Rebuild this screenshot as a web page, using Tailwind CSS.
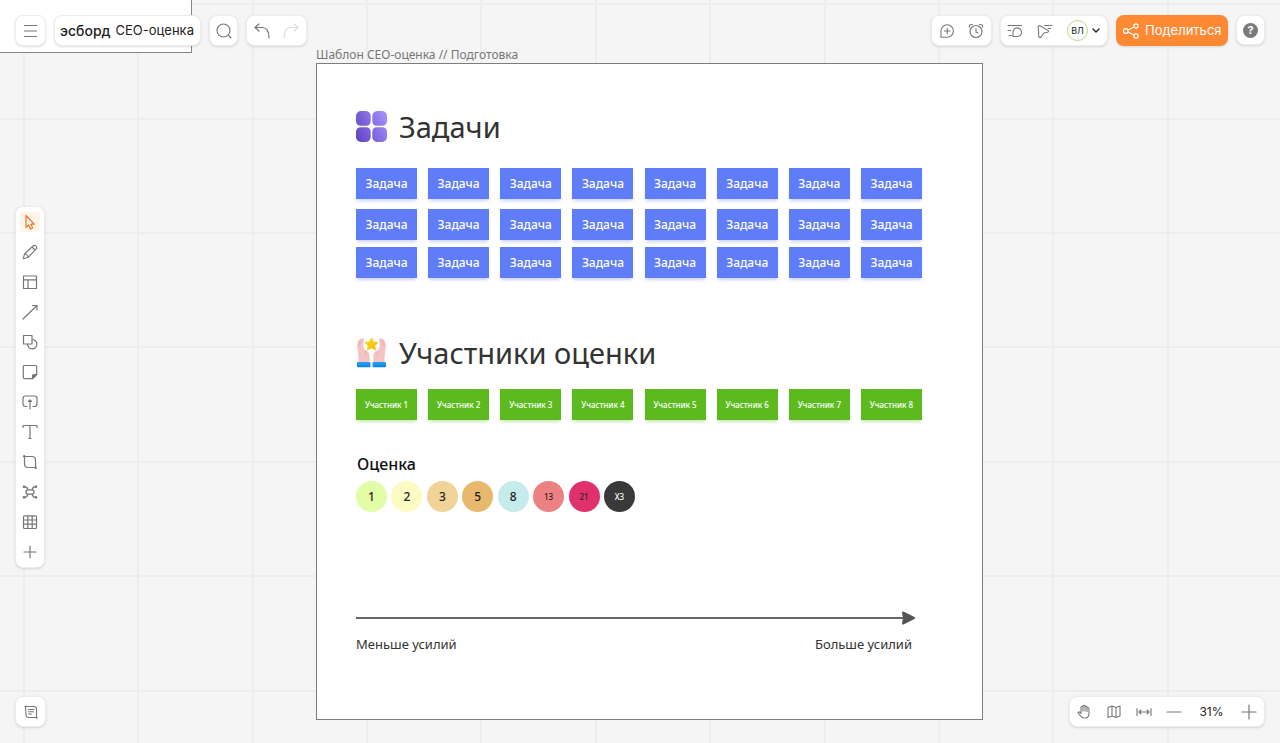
<!DOCTYPE html>
<html lang="ru">
<head>
<meta charset="utf-8">
<meta name="viewport" content="width=device-width, initial-scale=1">
<title>СЕО-оценка</title>
<script src="https://cdn.jsdelivr.net/npm/@tailwindcss/browser@4"></script>
</head>
<body class="relative h-screen min-h-[640px] overflow-hidden bg-[#f5f5f5] font-['Noto_Sans',sans-serif] text-[#333]">

<!-- Canvas -->
<main class="absolute inset-0 overflow-hidden">
  <svg class="absolute inset-0 h-full w-full" fill="none" stroke="#ededed" stroke-width="2" aria-hidden="true">
    <path d="M24 0V2000M138 0V2000M253 0V2000M367 0V2000M481 0V2000M596 0V2000M710 0V2000M825 0V2000M939 0V2000M1053 0V2000M1168 0V2000M0 4H3000M0 119H3000M0 233H3000M0 347H3000M0 462H3000M0 576H3000M0 691H3000"/>
  </svg>
  <div class="absolute top-0 left-0 h-[53px] w-48 border-r border-b border-[#858585] bg-white"></div>

  <section class="absolute top-[46px] left-[316px] w-[667px]">
    <h1 class="h-[17px] text-[12px] leading-[18px] text-[#757575]">Шаблон СЕО-оценка // Подготовка</h1>
    <div class="flex h-[657px] flex-col border border-[#7d7d7d] bg-white pt-[47px] pr-[60px] pl-[39px]">
      <div class="flex h-[31px] items-center gap-3">
        <svg class="h-[31px] w-[31px]" viewBox="0 0 31 31" aria-hidden="true">
          <defs><linearGradient id="g" gradientUnits="userSpaceOnUse" x1="0" y1="24" x2="31" y2="8"><stop offset="0" stop-color="#6447c4"/><stop offset="1" stop-color="#a18dfb"/></linearGradient></defs>
          <path fill="url(#g)" d="M5 0h5a5 5 0 0 1 4.700 5v5q0 4.700-4.700 4.700h-5q-5 0-5-4.700v-5a5 5 0 0 1 5-5zM21 0h5a5 5 0 0 1 5 5v5q0 4.700-5 4.700h-5q-4.700 0-4.700-4.700v-5a5 5 0 0 1 4.700-5zM5 16.300h5q4.700 0 4.700 4.700v5a5 5 0 0 1-4.700 5h-5a5 5 0 0 1-5-5v-5q0-4.700 5-4.700zM21 16.300h5q5 0 5 4.700v5a5 5 0 0 1-5 5h-5a5 5 0 0 1-4.700-5v-5q0-4.700 4.700-4.700z"/>
        </svg>
        <h2 class="text-[29px] leading-8">Задачи</h2>
      </div>
      <div id="tasks" class="mt-[26px] flex flex-col"></div>

      <div class="mt-[59px] flex h-[31px] items-center gap-3">
        <svg class="h-[31px] w-[31px]" viewBox="0 0 31 31" aria-hidden="true">
          <defs>
            <linearGradient id="s" x1="0" y1="0" x2="1" y2="1"><stop offset="0" stop-color="#ffdf2e"/><stop offset="1" stop-color="#f4b400"/></linearGradient>
            <linearGradient id="c" x1="0" y1="0" x2="0" y2="1"><stop offset="0" stop-color="#27a3f5"/><stop offset="1" stop-color="#0b80de"/></linearGradient>
          </defs>
          <g id="hand">
            <path fill="#f6c3c4" d="M6.500 1.200C7.800 1 8.400 2.200 7.800 3.600L7.100 9C8 11 8.300 12.800 9.500 13.500C12 13.600 13.600 16 13.600 19V25H2.500V19L1.200 10C1.200 7 2 4.500 3.200 3C4.400 1.800 5.400 1 6.500 1.200Z"/>
            <path stroke="#eda4ab" stroke-width=".7" fill="none" stroke-linecap="round" d="M5.200 2.500L3.800 8M3.300 4L2.700 9M9.500 14Q9 17 10.500 19"/>
            <rect x="1" y="25" width="13.500" height="5.200" rx="1" fill="url(#c)"/>
          </g>
          <use href="#hand" transform="matrix(-1 0 0 1 31 0)"/>
          <path fill="url(#s)" stroke="#f9c80e" stroke-width=".8" stroke-linejoin="round" d="M15.500 1L17.500 5L22 5.600L18.800 8.800L19.600 13L15.500 11L11.400 13L12.200 8.800L9 5.600L13.400 5Z"/>
        </svg>
        <h2 class="text-[29px] leading-8">Участники оценки</h2>
      </div>
      <div id="people" class="mt-[21px] flex justify-between"></div>

      <h3 class="mt-[33px] h-[22px] pl-px text-[16px] leading-[22px] font-medium text-[#111]">Оценка</h3>
      <div class="mt-[6px] flex w-[279px] justify-between text-[12px] font-medium text-[#222]">
        <span class="flex size-[31px] items-center justify-center rounded-full bg-[#e1fda6]">1</span>
        <span class="flex size-[31px] items-center justify-center rounded-full bg-[#fdfbc2]">2</span>
        <span class="flex size-[31px] items-center justify-center rounded-full bg-[#f1d297]">3</span>
        <span class="flex size-[31px] items-center justify-center rounded-full bg-[#e8b96d]">5</span>
        <span class="flex size-[31px] items-center justify-center rounded-full bg-[#c5ebea]">8</span>
        <span class="flex size-[31px] items-center justify-center rounded-full bg-[#ed8181] text-[8px]">13</span>
        <span class="flex size-[31px] items-center justify-center rounded-full bg-[#e0316c] text-[8px]">21</span>
        <span class="flex size-[31px] items-center justify-center rounded-full bg-[#393939] text-[8px] text-white">X3</span>
      </div>

      <svg class="mt-[98px] h-4 w-[560px]" viewBox="0 0 560 16" aria-hidden="true"><path d="M0 8H548" stroke="#666" stroke-width="2"/><path d="M547 2.500L558 8L547 13.500L548 8Z" fill="#555" stroke="#555" stroke-width="2" stroke-linejoin="round"/></svg>
      <div class="mt-2 flex w-[556px] justify-between text-[13px] leading-5">
        <p>Меньше усилий</p><p>Больше усилий</p>
      </div>
    </div>
  </section>
</main>

<!-- Controls over the canvas -->
<div class="relative flex h-full flex-col justify-between px-[15px] pt-[15px] pb-4 font-[Inter,sans-serif] text-[#777]">
  <header class="flex items-start justify-between">
    <div class="flex gap-2">
      <button aria-label="Меню" class="flex h-[31px] w-[31px] items-center justify-center rounded-lg border border-[#ececec] bg-white shadow-sm">
        <svg class="size-5" viewBox="0 0 20 20" fill="none" stroke="#777" stroke-width="1.200"><path d="M3 4.500H16M3 10H16M3 15.500H16"/></svg>
      </button>
      <div class="flex h-[31px] w-[147px] items-center gap-[5px] rounded-lg border border-[#ececec] bg-white pl-[5px] whitespace-nowrap text-[13px] text-[#222] shadow-sm">
        <a href="#" class="text-[14px] font-medium">эсборд</a><button>СЕО-оценка</button>
      </div>
      <button aria-label="Поиск" class="flex h-[31px] w-[29px] items-center justify-center rounded-lg border border-[#ececec] bg-white shadow-sm">
        <svg class="size-5" viewBox="0 0 20 20" fill="none" stroke="#777" stroke-width="1.100" stroke-linecap="round"><circle cx="9.500" cy="9.500" r="6.500"/><path d="M14.200 14.200L17 17"/></svg>
      </button>
      <div class="flex h-[31px] w-[61px] items-center justify-around rounded-lg border border-[#ececec] bg-white shadow-sm">
        <button aria-label="Отменить"><svg class="size-5" viewBox="0 0 20 20" fill="none" stroke="#777" stroke-width="1.200" stroke-linecap="round" stroke-linejoin="round"><path d="M7 3L3 6.500L7 10M3 6.500H10Q17 6.500 17 17"/></svg></button>
        <button aria-label="Повторить" disabled><svg class="size-5" viewBox="0 0 20 20" fill="none" stroke="#ddd" stroke-width="1.200" stroke-linecap="round" stroke-linejoin="round"><path d="M13 3L17 6.500L13 10M17 6.500H10Q3 6.500 3 17"/></svg></button>
      </div>
    </div>
    <div class="flex gap-2">
      <div class="flex h-[31px] w-[61px] items-center justify-around rounded-lg border border-[#ececec] bg-white shadow-sm">
        <button aria-label="Комментарий"><svg class="size-5" viewBox="0 0 20 20" fill="none" stroke="#777" stroke-width="1.100" stroke-linecap="round" stroke-linejoin="round"><path d="M4 16.200V10A6.200 6.200 0 1 1 10.200 16.200ZM10.200 7.200V12.800M7.400 10H13"/></svg></button>
        <button aria-label="Таймер"><svg class="size-5" viewBox="0 0 20 20" fill="none" stroke="#777" stroke-width="1.100" stroke-linecap="round" stroke-linejoin="round"><circle cx="10" cy="10.500" r="6"/><path d="M10 7.200V11L12 12M3.500 6.200Q2.700 3 6.500 3.500M16.500 6.200Q17.300 3 13.500 3.500"/></svg></button>
      </div>
      <div class="flex h-[31px] w-[108px] items-center rounded-lg border border-[#ececec] bg-white pl-1 shadow-sm">
        <button aria-label="Активность"><svg class="size-5" viewBox="0 0 20 20" fill="none" stroke="#777" stroke-width="1.100" stroke-linecap="round" stroke-linejoin="round"><path d="M3 4.500H16.500M3 9.500H5.500M4 14.500H6.500M8 15.500V11.500A4.300 4.300 0 1 1 12.300 15.500Z"/></svg></button>
        <button aria-label="Курсоры" class="ml-[10px]"><svg class="size-5" viewBox="0 0 20 20" fill="none" stroke="#777" stroke-width="1.100" stroke-linecap="round" stroke-linejoin="round"><path d="M3.200 5.500Q3.600 4.200 5 4.800L13.200 9.600Q14.200 10.800 12.500 11.200L9 12L6 16Q4.300 17.300 3.800 15.500ZM9.500 4.500H16.800M13 7.500H15.500"/></svg></button>
        <button aria-label="Профиль" class="ml-3 flex items-center gap-1">
          <span class="flex size-[21px] items-center justify-center rounded-full border border-[#bdd884] text-[9px] text-[#222]">ВЛ</span>
          <svg class="h-[6px] w-2" viewBox="0 0 8 6" fill="none" stroke="#222" stroke-width="1.400" stroke-linecap="round" stroke-linejoin="round"><path d="M1 1L4 4L7 1"/></svg>
        </button>
      </div>
      <button class="flex h-[31px] w-[112px] items-center gap-1 rounded-lg bg-[#ff8833] pl-[5px] text-[13px] text-white shadow-sm">
        <svg class="size-5" viewBox="0 0 20 20" fill="none" stroke="#fff" stroke-width="1.200"><circle cx="4.800" cy="10" r="2.300"/><circle cx="15" cy="5" r="2.200"/><circle cx="15" cy="15" r="2.200"/><path d="M7 9L13 6M7 11L13 14"/></svg>
        Поделиться
      </button>
      <button aria-label="Справка" class="flex h-[30px] w-[29px] items-center justify-center rounded-lg border border-[#ececec] bg-white shadow-sm">
        <span class="flex size-[15px] items-center justify-center rounded-full bg-[#7a7a7a] text-[11px] font-bold text-white">?</span>
      </button>
    </div>
  </header>

  <nav aria-label="Инструменты" class="mt-8 flex w-[30px] flex-col rounded-lg border border-[#ececec] bg-white shadow-sm [&_button]:flex [&_button]:h-[30px] [&_button]:items-center [&_button]:justify-center [&_svg]:size-5">
    <button aria-label="Выделение"><svg class="rounded-sm bg-[#fff4e6]" viewBox="0 0 20 20" fill="none" stroke="#e8762d" stroke-width="1.200" stroke-linejoin="round"><path d="M6 3.500V15.200L8.700 13L10.500 17L12.700 16L11 12.200H14.200Z"/></svg></button>
    <button aria-label="Карандаш"><svg viewBox="0 0 20 20" fill="none" stroke="#777" stroke-width="1.100" stroke-linejoin="round"><path d="M3.200 16.800L4.500 12L13 4Q14.500 2.700 16 4.200Q17.400 5.700 16 7.200L8 15.500ZM4.500 12Q7.500 12.200 8 15.500M12 5L15 8"/></svg></button>
    <button aria-label="Шаблоны"><svg viewBox="0 0 20 20" fill="none" stroke="#777" stroke-width="1.200" stroke-linejoin="round"><path d="M3.500 4H16.500V16.500H3.500ZM3.500 7.800H16.500M8 7.800V16.500"/></svg></button>
    <button aria-label="Линия"><svg viewBox="0 0 20 20" fill="none" stroke="#777" stroke-width="1.200" stroke-linecap="round" stroke-linejoin="round"><path d="M3 17L17 3.500M12.500 3.500H17V8"/></svg></button>
    <button aria-label="Фигуры"><svg viewBox="0 0 20 20" fill="none" stroke="#777" stroke-width="1.200" stroke-linejoin="round"><path d="M3.500 3.500H12V12H3.500ZM12 7.500A4.700 4.700 0 1 1 7.500 12"/></svg></button>
    <button aria-label="Стикер"><svg viewBox="0 0 20 20" fill="none" stroke="#777" stroke-width="1.200" stroke-linejoin="round"><path d="M4.500 3.500H15.500Q16.700 3.500 16.700 4.700V12.500L12.500 16.700H4.500Q3.300 16.700 3.300 15.500V4.700Q3.300 3.500 4.500 3.500Z"/><path fill="#777" d="M16.700 12.500H13.500L12.500 13.500V16.700Z"/></svg></button>
    <button aria-label="Загрузка"><svg viewBox="0 0 20 20" fill="none" stroke="#777" stroke-width="1.200" stroke-linecap="round" stroke-linejoin="round"><path d="M7 14.500H5.500Q3 14.500 3 12V6.500Q3 4 5.500 4H14.500Q17 4 17 6.500V12Q17 14.500 14.500 14.500H13M10 17V9"/><path fill="#777" d="M8.500 9.500L10 8L11.500 9.500Z"/></svg></button>
    <button aria-label="Текст"><svg viewBox="0 0 20 20" fill="none" stroke="#777" stroke-width="1.200" stroke-linecap="round" stroke-linejoin="round"><path d="M3 5.500V3.500H17V5.500M10 3.500V16.500M9 16.500H11"/></svg></button>
    <button aria-label="Фрейм"><svg viewBox="0 0 20 20" fill="none" stroke="#777" stroke-width="1.200" stroke-linejoin="round"><path d="M4.500 4.500H12Q15.500 4.500 15.500 8V15.500H8Q4.500 15.500 4.500 12Z"/><g fill="#777" stroke="none"><circle cx="4.200" cy="4.300" r="1.200"/><circle cx="15.700" cy="15.700" r="1.200"/></g></svg></button>
    <button aria-label="Схема"><svg viewBox="0 0 20 20" fill="none" stroke="#777" stroke-width="1.300"><rect x="6" y="7.800" width="8" height="4.400" rx="2.200"/><path d="M3.500 4.500Q7 4.500 8 7.800M16.500 4.500Q13 4.500 12 7.800M3.500 15.500Q7 15.500 8 12.200M16.500 15.500Q13 15.500 12 12.200"/><g fill="#777" stroke="none"><circle cx="4" cy="4.700" r="1.300"/><circle cx="16" cy="4.700" r="1.300"/><circle cx="4" cy="15.300" r="1.300"/><circle cx="16" cy="15.300" r="1.300"/></g></svg></button>
    <button aria-label="Таблица"><svg viewBox="0 0 20 20" fill="none" stroke="#777" stroke-width="1.200"><rect x="3.500" y="3.800" width="13" height="12.700" rx="1"/><path d="M3.500 8H16.500M3.500 12.200H16.500M7.800 4V16.500M12.200 4V16.500"/></svg></button>
    <button aria-label="Ещё"><svg viewBox="0 0 20 20" fill="none" stroke="#777" stroke-width="1.200" stroke-linecap="round"><path d="M4 10H16M10 4V16"/></svg></button>
  </nav>

  <footer class="flex items-end justify-between">
    <button aria-label="Заметки" class="flex size-[31px] items-center justify-center rounded-lg border border-[#ececec] bg-white shadow-sm">
      <svg class="size-5" viewBox="0 0 20 20" fill="none" stroke="#777" stroke-width="1.100" stroke-linecap="round" stroke-linejoin="round"><path d="M4.500 4.500H13Q15.500 4.500 15.500 7V15.500H7.500Q5 15.500 5 13ZM7.500 7.500H13M7.500 9.800H12.500M7.500 12H10.500"/><g fill="#777" stroke="none"><circle cx="4.500" cy="4.500" r="1"/><circle cx="15.700" cy="15.700" r="1"/></g></svg>
    </button>
    <div class="flex h-[31px] w-[196px] items-center rounded-lg border border-[#ececec] bg-white pl-1 text-[12px] text-[#222] shadow-sm">
      <button aria-label="Рука"><svg class="size-5" viewBox="0 0 20 20" fill="none" stroke="#777" stroke-width="1.100" stroke-linecap="round" stroke-linejoin="round"><path d="M7 10V5.300A1 1 0 0 1 9 5.300V9M9 5V4.300A1 1 0 0 1 11 4.300V9M11 5A1 1 0 0 1 13 5V9.500M13 6.500A1 1 0 0 1 15 6.500V11.500Q15 16 10.800 16Q8.500 16 7 14.300L4.300 11.300Q3.800 10.300 4.800 9.900Q5.500 9.700 7 11.500V8"/></svg></button>
      <button aria-label="Карта" class="ml-[10px]"><svg class="size-5" viewBox="0 0 20 20" fill="none" stroke="#777" stroke-width="1.100" stroke-linejoin="round"><path d="M4 5.500L8 4L12 5.500L16 4V14L12 15.500L8 14L4 15.500ZM8 4V14M12 5.500V15.500"/></svg></button>
      <button aria-label="По ширине" class="ml-[10px]"><svg class="size-5" viewBox="0 0 20 20" fill="none" stroke="#777" stroke-width="1.100" stroke-linecap="round" stroke-linejoin="round"><path d="M3 6.500V13.500M17 6.500V13.500M5 10H15M7 8L5 10L7 12M13 8L15 10L13 12"/></svg></button>
      <button aria-label="Уменьшить" class="ml-[10px]"><svg class="size-5" viewBox="0 0 20 20" fill="none" stroke="#777" stroke-width="1.200" stroke-linecap="round"><path d="M3 10H17"/></svg></button>
      <button class="flex-1">31%</button>
      <button aria-label="Увеличить" class="mr-[5px]"><svg class="size-5" viewBox="0 0 20 20" fill="none" stroke="#777" stroke-width="1.200" stroke-linecap="round"><path d="M3 10H17M10 3V17"/></svg></button>
    </div>
  </footer>
</div>

<script>
  const task = '<div class="flex h-[31px] w-[61px] items-center justify-center bg-[#5f7cf9] text-[12px] font-medium text-white shadow-[0_3px_3px_-1px_#5f7cf955]">Задача</div>';
  const row = gap => '<div class="flex justify-between ' + gap + '">' + task.repeat(8) + '</div>';
  document.getElementById('tasks').innerHTML = row('mt-0') + row('mt-[10px]') + row('mt-[7px]');
  document.getElementById('people').innerHTML = Array.from({ length: 8 }, (_, i) =>
    '<div class="flex h-[31px] w-[61px] items-center justify-center bg-[#5dba1e] text-[8px] font-medium text-white shadow-[0_3px_3px_-1px_#5dba1e55]">Участник ' + (i + 1) + '</div>').join('');
</script>
</body>
</html>
